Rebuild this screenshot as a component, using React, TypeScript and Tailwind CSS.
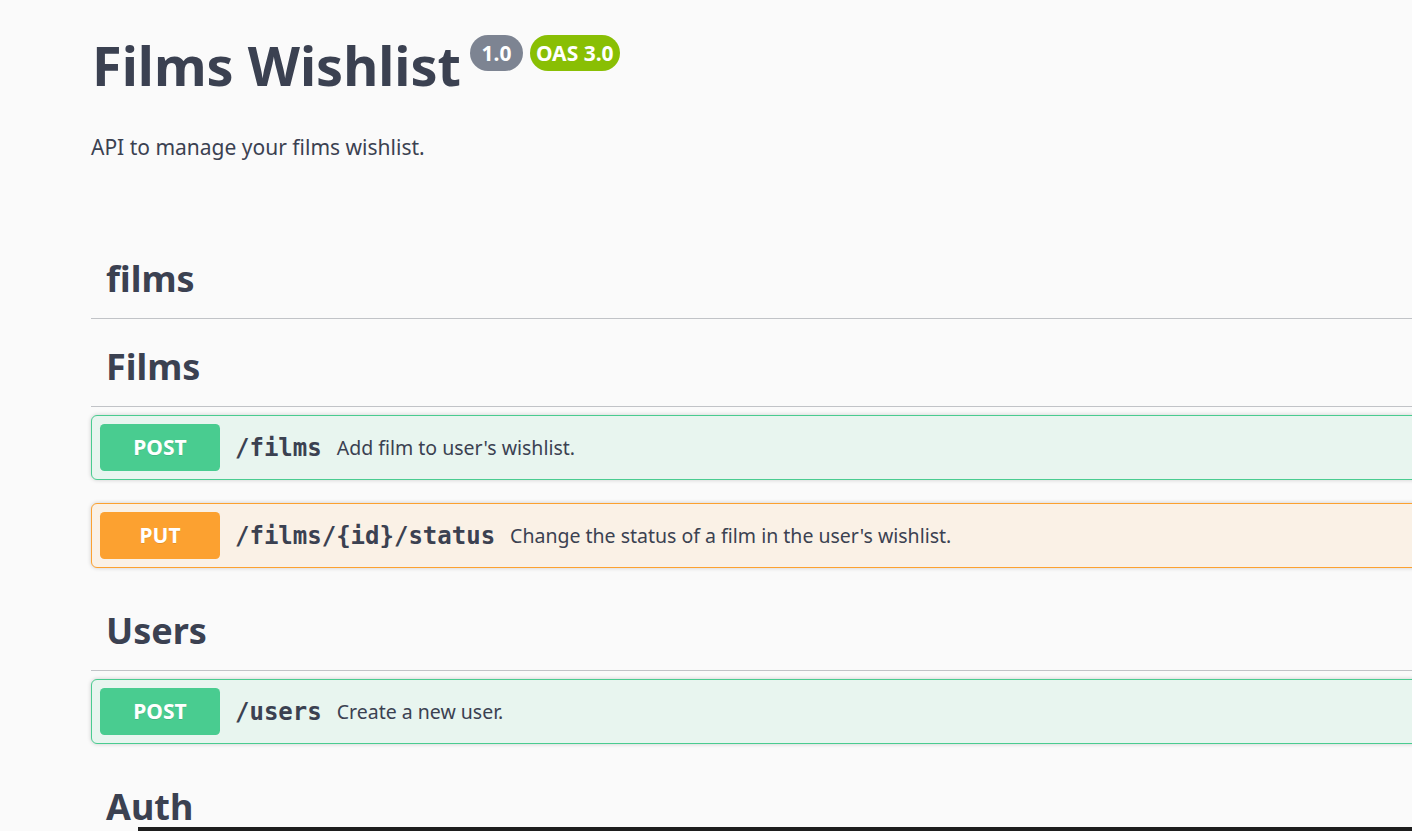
import React from "react";

const sans = "font-['Noto_Sans',sans-serif]";

function Badge({ method }: { method: "POST" | "PUT" }) {
  const bg = method === "POST" ? "bg-[#49cc90]" : "bg-[#fca130]";
  return (
    <div
      className={`${bg} w-[120px] h-[47px] shrink-0 rounded-[4.5px] flex items-center justify-center text-white text-[21px] font-bold ${sans} [text-shadow:0_1px_0_rgba(0,0,0,0.1)]`}
    >
      {method}
    </div>
  );
}

function Op({
  method,
  path,
  desc,
}: {
  method: "POST" | "PUT";
  path: string;
  desc: string;
}) {
  const box =
    method === "POST"
      ? "border-[#49cc90] bg-[#e8f5ef]"
      : "border-[#fca130] bg-[#faf1e6]";
  return (
    <div
      className={`${box} border rounded-[6px] p-[8px] mb-[23px] flex items-center shadow-[0_0_4.5px_rgba(0,0,0,0.19)]`}
    >
      <Badge method={method} />
      <span className="px-[15px] text-[24px] font-bold text-[#3b4151] font-['DejaVu_Sans_Mono',monospace] whitespace-nowrap">
        {path}
      </span>
      <span className={`text-[19.5px] text-[#3b4151] ${sans} whitespace-nowrap`}>
        {desc}
      </span>
    </div>
  );
}

function TagHeader({ children }: { children: React.ReactNode }) {
  return (
    <div className="pt-[15px] pb-[15px] pl-[15px] border-b border-[#c1c3c7] mb-[8px]">
      <h3 className={`text-[36px] leading-[49px] font-bold text-[#3b4151] ${sans}`}>
        {children}
      </h3>
    </div>
  );
}

export default function App() {
  return (
    <div className="relative w-[1412px] h-[831px] overflow-hidden bg-[#fafafa]">
      <div className="pl-[91px] pt-[28px] w-[1500px]">
        <div className="flex items-start">
          <h2
            className={`text-[54px] leading-[74px] font-bold text-[#3b4151] ${sans} pl-[1px]`}
          >
            Films Wishlist
          </h2>
          <span
            className={`ml-[9px] mt-[7px] h-[36px] px-[6px] rounded-full bg-[#7d8492] text-white text-[21px] font-bold leading-[36px] whitespace-pre ${sans}`}
          >
            {" 1.0 "}
          </span>
          <span
            className={`ml-[7px] mt-[7px] h-[36px] px-[6px] rounded-full bg-[#89bf04] text-white text-[21px] font-bold leading-[36px] whitespace-pre ${sans}`}
          >
            OAS 3.0
          </span>
        </div>
        <p className={`mt-[31px] text-[21px] leading-[29px] text-[#3b4151] ${sans}`}>
          API to manage your films wishlist.
        </p>

        <div className="mt-[77px]">
          <TagHeader>films</TagHeader>
          <TagHeader>Films</TagHeader>
          <Op method="POST" path="/films" desc="Add film to user's wishlist." />
          <Op
            method="PUT"
            path="/films/{id}/status"
            desc="Change the status of a film in the user's wishlist."
          />
          <TagHeader>Users</TagHeader>
          <Op method="POST" path="/users" desc="Create a new user." />
          <TagHeader>Auth</TagHeader>
        </div>
      </div>
      <div className="absolute left-[138px] right-0 bottom-0 h-[4px] bg-[#1e1e1e]" />
    </div>
  );
}
